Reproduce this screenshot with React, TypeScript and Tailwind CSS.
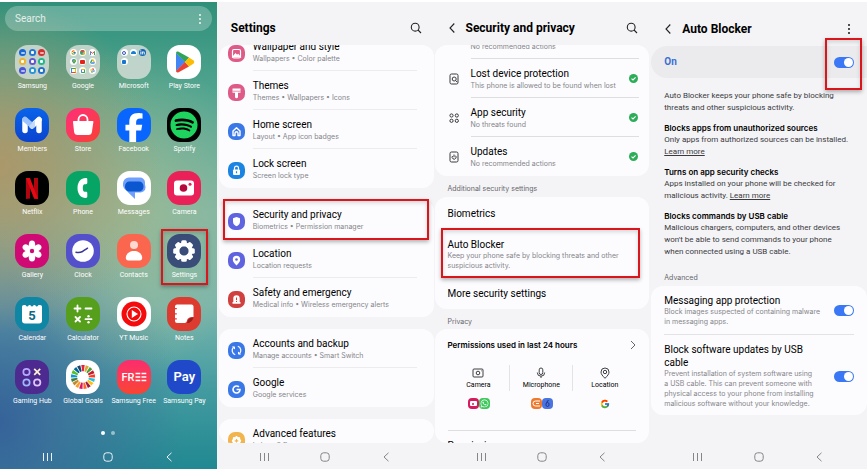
import React, { useState } from 'react';
import { FaFacebookF, FaGoogle, FaLinkedinIn, FaSpotify, FaWhatsapp } from 'react-icons/fa6';
import { FcGoogle } from 'react-icons/fc';

const GOALS = ['#e5243b', '#dda63a', '#4c9f38', '#c5192d', '#ff3a21', '#26bde2', '#fcc30b', '#a21942', '#fd6925', '#dd1367', '#fd9d24', '#bf8b2e', '#3f7e44', '#0a97d9', '#56c02b', '#00689d', '#19486a'];

/* ---------- shared pieces ---------- */

function Highlight({ className }: { className: string }) {
  return <span className={`pointer-events-none absolute z-10 border-2 border-[#d9161c] shadow-[0_2px_4px_rgba(0,0,0,0.3),inset_0_2px_4px_rgba(0,0,0,0.15)] ${className}`} />;
}

function NavBar({ light = false }: { light?: boolean }) {
  return (
    <nav className={`flex h-[26px] shrink-0 items-center justify-between px-[42px] pt-px ${light ? 'text-white/90' : 'text-[#85858a]'}`}>
      <button aria-label="Recents">
        <svg width="11" height="10" viewBox="0 0 11 10" stroke="currentColor" strokeWidth="1"><path d="M1.500 1v8M5.500 1v8M9.500 1v8" /></svg>
      </button>
      <button aria-label="Home">
        <svg width="10" height="10" viewBox="0 0 10 10" fill="none" stroke="currentColor" strokeWidth="1"><rect x="0.800" y="0.800" width="8.400" height="8.400" rx="2.800" /></svg>
      </button>
      <button aria-label="Back">
        <svg width="11" height="10" viewBox="0 0 11 10" fill="none" stroke="currentColor" strokeWidth="1"><path d="M7.500 0.800 3 5l4.500 4.200" /></svg>
      </button>
    </nav>
  );
}

function BackButton() {
  return (
    <button aria-label="Back" className="mr-[10px]">
      <svg width="8" height="12" viewBox="0 0 8 12" fill="none" stroke="#222" strokeWidth="1.100"><path d="M6.300 1.500 2 6l4.300 4.500" /></svg>
    </button>
  );
}

function SearchButton() {
  return (
    <button aria-label="Search" className="ml-auto">
      <svg width="12" height="12" viewBox="0 0 12 12" fill="none" stroke="#222" strokeWidth="1.100"><circle cx="5.200" cy="5.200" r="3.900" /><path d="m8 8 3 3" /></svg>
    </button>
  );
}

function MoreDots() {
  return <svg width="4" height="12" viewBox="0 0 4 12" fill="currentColor"><circle cx="2" cy="2" r="0.900" /><circle cx="2" cy="6" r="0.900" /><circle cx="2" cy="10" r="0.900" /></svg>;
}

function Toggle({ id }: { id: string }) {
  const [on, setOn] = useState(true);
  return (
    <input
      id={id}
      type="checkbox"
      role="switch"
      checked={on}
      onChange={() => setOn(!on)}
      className="relative h-[11px] w-5 shrink-0 appearance-none rounded-full bg-[#b5b5ba] before:absolute before:top-px before:left-px before:size-[9px] before:rounded-full before:bg-white checked:bg-[#3b78f5] checked:before:left-[10px]"
    />
  );
}

/* ---------- home screen ---------- */

const dot = (bg: string, inner?: React.ReactNode) => ({ bg, inner });
const bar = (c: string) => <span className={`h-[2px] w-1 rounded-full ${c}`} />;
const sq = (c: string) => <span className={`size-[3px] rounded-[1px] ${c}`} />;

const samsungApps = [
  dot('bg-[#1767d8]', bar('bg-[#a9cdf7]')), dot('bg-[#2277d5]', sq('bg-white')), dot('bg-[#d32f2f]', bar('bg-[#f6b0b0]')),
  dot('bg-[#efb32f]', sq('bg-white')), dot('bg-[#6257d2]', sq('bg-white')), dot('bg-[#21b98a]', sq('bg-white')),
  dot('bg-[#4a56d6]', bar('bg-[#b6bdf8]')), dot('bg-[#2595dc]', sq('bg-white')), dot('bg-[#1d6fd0]', sq('bg-white')),
];
const googleApps = [
  dot('bg-white', <FcGoogle size={5} />),
  dot('bg-white', <svg width="5" height="5" viewBox="0 0 10 10"><circle cx="5" cy="5" r="5" fill="#34a853" /><path d="M5 5 .7 2.500A5 5 0 0 1 9.300 2.500Z" fill="#ea4335" /><path d="M5 5 9.300 2.500A5 5 0 0 1 5 10Z" fill="#fbbc05" /><circle cx="5" cy="5" r="2" fill="#4285f4" /></svg>),
  dot('bg-white', <svg width="5" height="4" viewBox="0 0 10 8" fill="none" strokeWidth="2"><path d="M1 8V1" stroke="#4285f4" /><path d="m1 1 4 3.500L9 1" stroke="#ea4335" /><path d="M9 8V1" stroke="#34a853" /></svg>),
  dot('bg-white', <svg width="4" height="5" viewBox="0 0 8 10"><path d="M4 10C2 7 0 6 0 4a4 4 0 0 1 8 0c0 2-2 3-4 6Z" fill="#34a853" /><path d="M0 4a4 4 0 0 1 4-4v4Z" fill="#4285f4" /><circle cx="4" cy="4" r="1.500" fill="#fbbc05" /></svg>),
  dot('bg-white', <span className="h-1 w-[5px] rounded-[1px] bg-[#e62117]" />),
  dot('bg-white', <svg width="5" height="5" viewBox="0 0 10 9"><path d="M3.500 0h3L10 6H7Z" fill="#fbbc05" /><path d="M3.500 0 5 2.500 1.500 9 0 6Z" fill="#34a853" /><path d="M3 6h7L8.500 9h-7Z" fill="#4285f4" /></svg>),
  dot('bg-white', <span className="size-[5px] border border-t-[#34a853] border-r-[#fbbc05] border-b-[#ea4335] border-l-[#4285f4]" />),
  dot('bg-white', <span className="size-[4px] rounded-[1px] border border-t-[#fbbc05] border-r-[#34a853] border-b-[#34a853] border-l-[#4285f4]" />),
  dot('bg-white', <svg width="5" height="5" viewBox="0 0 10 10"><path d="M5 5V0a2.500 2.500 0 0 1 0 5" fill="#ea4335" /><path d="M5 5h5a2.500 2.500 0 0 1-5 0" fill="#4285f4" /><path d="M5 5v5a2.500 2.500 0 0 1 0-5" fill="#34a853" /><path d="M5 5H0a2.500 2.500 0 0 1 5 0" fill="#fbbc05" /></svg>),
];
const microsoftApps = [
  dot('bg-white', <span className="size-1 rounded-full border border-[#3a55b8]" />),
  dot('bg-white', <span className="h-[3px] w-[5px] rounded-t-full bg-[#1380d8]" />),
  dot('bg-[#1264b6]', <FaLinkedinIn size={5} color="#fff" />),
  dot('bg-white', <span className="size-[4px] rounded-[1px] bg-[#1976cf]" />),
];

function Folder({ items }: { items: { bg: string; inner?: React.ReactNode }[] }) {
  return (
    <div className="grid size-full grid-cols-3 content-start gap-[2px] bg-[#d3ddd6]/85 p-1">
      {items.map((it, i) => <span key={i} className={`flex size-[7px] items-center justify-center rounded-full ${it.bg}`}>{it.inner}</span>)}
    </div>
  );
}

function Art({ children }: { children: React.ReactNode }) {
  return <svg width="34" height="34" viewBox="0 0 34 34">{children}</svg>;
}

const apps: { name: string; bg: string; icon: React.ReactNode }[] = [
  { name: 'Samsung', bg: '', icon: <Folder items={samsungApps} /> },
  { name: 'Google', bg: '', icon: <Folder items={googleApps} /> },
  { name: 'Microsoft', bg: '', icon: <Folder items={microsoftApps} /> },
  {
    name: 'Play Store', bg: 'bg-white',
    icon: <Art><path d="M9 8v18L18.500 17Z" fill="#4285f4" /><path d="M9 8.200c0-1.600 1.300-2.100 2.600-1.400L22 12.600 18 17Z" fill="#30a45a" /><path d="M9 25.800c0 1.600 1.300 2.100 2.600 1.400L22 21.400 18 17Z" fill="#ea4335" /><path d="m22 12.500 4.300 2.700c1.300.9 1.300 2.700 0 3.600L22 21.500 17.800 17Z" fill="#fbbc04" /></Art>,
  },
  {
    name: 'Members', bg: 'bg-gradient-to-b from-[#0b63ea] to-[#0b43cf]',
    icon: <Art><path d="M10 22.500V12M24 22.500V12" stroke="#fff" strokeWidth="5.500" strokeLinecap="round" /><path d="m24 11.500-7 6.500" stroke="#fff" strokeWidth="5.500" strokeLinecap="round" /><path d="m10 11.500 7 6" stroke="#9cc3ff" strokeWidth="5.500" strokeLinecap="round" /><path d="M14.500 17.500 20 12.200v5.500l-3 3c-1 .4-2.500-1-2.500-3.200Z" fill="#c4dbff" /></Art>,
  },
  {
    name: 'Store', bg: 'bg-gradient-to-br from-[#ff2c78] to-[#f8402e]',
    icon: <Art><path d="M12.500 14v-2.500a4.500 4.500 0 0 1 9 0V14" fill="none" stroke="#fff" strokeWidth="1.800" /><path d="M8 13h18.500c.6 0 1 .4.900 1l-1.500 10a3.500 3.500 0 0 1-3.400 3h-11a3.500 3.500 0 0 1-3.400-3L7 14c-.1-.6.4-1 1-1Z" fill="#fff" /></Art>,
  },
  { name: 'Facebook', bg: 'bg-[#0866ff]', icon: <span className="mt-[5px] flex justify-center"><FaFacebookF size={30} color="#fff" /></span> },
  { name: 'Spotify', bg: 'bg-black', icon: <FaSpotify size={28} color="#1ed35e" className="mx-auto mt-[3px]" /> },
  {
    name: 'Netflix', bg: 'bg-black',
    icon: <Art><path d="M11 7h4v20.500l-4 .5ZM19 7h4v21l-4-.5Z" fill="#b1060f" /><path d="M11 7h4l8 21-4-.5Z" fill="#e50914" /></Art>,
  },
  {
    name: 'Phone', bg: 'bg-[#06a566]',
    icon: <Art><path d="M19.800 7c-5 0-8.300 4-8.300 10s3.300 10 8.300 10c1 0 1.500-.5 1.500-1.400v-3.400c0-.9-.5-1.400-1.400-1.400h-1.400c-1 0-1.700-1.500-1.700-3.800s.7-3.800 1.700-3.800h1.400c.9 0 1.400-.5 1.400-1.400V8.400c0-.9-.5-1.400-1.500-1.400Z" fill="#fff" /></Art>,
  },
  {
    name: 'Messages', bg: 'bg-white',
    icon: <Art><path d="M12 6.500h11a5 5 0 0 1 5 5v3a6 6 0 0 1-3 5.500H12a6 6 0 0 1-6-6v-1.500a6 6 0 0 1 6-6Z" fill="#6fa0fb" /><path d="M14 11h9.500a5 5 0 0 1 5 5v.500a5 5 0 0 1-5 5H18V28l-7-6.800a5 5 0 0 1-2.500-4.200Z" fill="#6fa0fb" /><path d="M12.500 10.500H22a4.500 4.500 0 0 1 4.500 5c0 3-2 5-5 5H13c-3 0-5-2-5-5a4.500 4.500 0 0 1 4.500-5Z" fill="#0b57d0" /></Art>,
  },
  {
    name: 'Camera', bg: 'bg-[#ea2158]',
    icon: <Art><rect x="7" y="9.500" width="20" height="15" rx="3" fill="#fff" /><circle cx="16.500" cy="17" r="3.800" fill="#b5093c" /><circle cx="23" cy="13.200" r="1.500" fill="#ea2158" /></Art>,
  },
  {
    name: 'Gallery', bg: 'bg-[#d00a74]',
    icon: <Art>{[0, 60, 120, 180, 240, 300].map((a) => <ellipse key={a} cx="17" cy="10.800" rx="3.200" ry="4.300" fill="#fff" transform={`rotate(${a} 17 17)`} />)}<circle cx="17" cy="17" r="4.500" fill="#fff" /><circle cx="17" cy="17" r="2.200" fill="#d00a74" /></Art>,
  },
  {
    name: 'Clock', bg: 'bg-[#5450cc]',
    icon: <Art><circle cx="17" cy="17" r="10.800" fill="#fff" /><path d="M10 18.200c3 .7 4.500.3 6.500-.7 1.500-.9 3-2 5-3.300" fill="none" stroke="#38339a" strokeWidth="1.500" strokeLinecap="round" /></Art>,
  },
  {
    name: 'Contacts', bg: 'bg-[#fb664f]',
    icon: <Art><circle cx="17" cy="11" r="4" fill="#ffd9d0" /><path d="M8.800 24c0-4 3.500-7 8.200-7s8.200 3 8.200 7c0 1.500-1 2.500-2.500 2.500H11.300c-1.500 0-2.500-1-2.500-2.500Z" fill="#fff" /></Art>,
  },
  {
    name: 'Settings', bg: 'bg-[#3a4d78]',
    icon: <Art>{[0, 45, 90, 135, 180, 225, 270, 315].map((a) => <rect key={a} x="14.200" y="6.200" width="5.600" height="6" rx="1.500" fill="#fff" transform={`rotate(${a} 17 17)`} />)}<circle cx="17" cy="17" r="6.700" fill="none" stroke="#fff" strokeWidth="4" /></Art>,
  },
  {
    name: 'Calendar', bg: 'bg-[#0e86a4]',
    icon: <Art><path d="M7 10c0-1.300.8-2 2-2h1.200c.8 0 .8 1.500 2 1.500s1.200-1.500 2-1.500h.8c.8 0 .8 1.500 2 1.500s1.200-1.500 2-1.500h.8c.8 0 .8 1.500 2 1.500s1.200-1.500 2-1.500H25c1.200 0 2 .7 2 2v13.500c0 1.800-1 3-3 3H10c-2 0-3-1.200-3-3Z" fill="#fff" /><text x="17" y="22.500" textAnchor="middle" fontSize="13" fontWeight="700" fill="#0b6a86">5</text></Art>,
  },
  {
    name: 'Calculator', bg: 'bg-[#569f1c]',
    icon: <Art><g stroke="#fff" strokeWidth="1.800" strokeLinecap="round"><path d="M8.500 11.500h6M11.500 8.500v6M19.500 11.500h6M9.500 20l4.500 4.500M14 20l-4.500 4.500M19.500 22.200h6" /></g><circle cx="22.500" cy="19.200" r="1.200" fill="#fff" /><circle cx="22.500" cy="25.200" r="1.200" fill="#fff" /></Art>,
  },
  {
    name: 'YT Music', bg: 'bg-white',
    icon: <Art><circle cx="17" cy="17" r="12.500" fill="#f40b0b" /><circle cx="17" cy="17" r="7" fill="none" stroke="#fff" strokeWidth="1.100" /><path d="m14.800 13 6.200 4-6.200 4Z" fill="#fff" /></Art>,
  },
  {
    name: 'Notes', bg: 'bg-[#dd3a30]',
    icon: <Art><path d="M10 7.500h14.500a2 2 0 0 1 2 2V20c-3.500-.5-6 1-6.500 3.500-.2 1.500-1 2.500-2.500 2.500H10a2 2 0 0 1-2-2V22.500h1.800v-1.300H8v-3.700h1.800v-1.300H8v-4h1.800v-1.300H8V9.500a2 2 0 0 1 2-2Z" fill="#fff" /><path d="M26.500 20.500c-3-.2-5.300 1-5.800 3.600l-.7 2c3.500 0 5.500-2.600 6.500-5.600Z" fill="#9c1d1a" /></Art>,
  },
  {
    name: 'Gaming Hub', bg: 'bg-[#4c2a90]',
    icon: <Art><g fill="none" strokeWidth="1.700"><circle cx="11.500" cy="12" r="3.200" stroke="#b9a8ff" /><path d="m19.200 8.900 6 6M25.200 8.900l-6 6" stroke="#fff3d6" /><circle cx="11.500" cy="22.500" r="3.200" stroke="#9db7ff" /><circle cx="22.200" cy="22.500" r="3.200" stroke="#e0c6ff" /></g></Art>,
  },
  {
    name: 'Global Goals', bg: 'bg-white',
    icon: <Art>{GOALS.map((c, i) => <path key={c} d="M15.300 5h3.400l-.9 6.200h-1.600Z" fill={c} transform={`rotate(${i * 21.18} 17 17)`} />)}</Art>,
  },
  {
    name: 'Samsung Free', bg: 'bg-gradient-to-b from-[#fb2c6d] to-[#f9442f]',
    icon: <Art><text x="4.500" y="20.800" fontSize="11" fontWeight="500" fill="#fff">FR</text><path d="M18.500 13.500h4.800M18.500 17h4.800M18.500 20.500h4.800M24.500 13.500h4.800M24.500 17h4.800M24.500 20.500h4.800" stroke="#fff" strokeWidth="1.400" /></Art>,
  },
  { name: 'Samsung Pay', bg: 'bg-[#1f49c8]', icon: <span className="block text-center text-[13px] leading-[34px] font-semibold text-white">Pay</span> },
];

function HomeScreen() {
  return (
    <section className="flex min-w-0 flex-col bg-[radial-gradient(ellipse_75%_36%_at_0%_35%,#ab986a_0%,#ab986acc_30%,#ab986a00_100%),radial-gradient(ellipse_60%_35%_at_60%_45%,#9fb890cc_0%,#9fb89000_100%),radial-gradient(ellipse_85%_48%_at_0%_90%,#36639a_0%,#3d6b9bcc_30%,#6f93a400_100%),linear-gradient(to_bottom,#2f907a_0%,#52a590_20%,#7fb8a8_45%,#7ab6ad_65%,#459ca1_82%,#218891_100%)]">
      <div className="mx-[5px] mt-1 flex h-[25px] items-center rounded-full bg-white/25 px-[10px] text-white">
        <input type="search" aria-label="Search" placeholder="Search" className="min-w-0 flex-1 bg-transparent text-[10px] leading-3 outline-none placeholder:text-white/80" />
        <button aria-label="More options"><MoreDots /></button>
      </div>
      <div className="mt-[14px] grid grid-cols-4 px-[7px]">
        {apps.map((a) => (
          <button key={a.name} className="relative flex h-[63px] flex-col items-center">
            <span className={`block size-[34px] overflow-hidden rounded-[13px] ${a.bg}`}>{a.icon}</span>
            <span className="mt-px text-[7px] leading-3 whitespace-nowrap text-white">{a.name}</span>
            {a.name === 'Settings' && <Highlight className="inset-x-[2px] -top-[5px] bottom-3" />}
          </button>
        ))}
      </div>
      <div className="mt-auto mb-2 flex justify-center gap-[6px]">
        <span className="size-1 rounded-full bg-white" />
        <span className="size-1 rounded-full bg-white/50" />
      </div>
      <NavBar light />
    </section>
  );
}

/* ---------- settings ---------- */

function Glyph({ children }: { children: React.ReactNode }) {
  return <svg width="17" height="17" viewBox="0 0 17 17" fill="none" stroke="#fff" strokeWidth="1.200">{children}</svg>;
}

type Row = { title: string; sub: string; bg: string; icon: React.ReactNode; marked?: boolean };

const groups: Row[][] = [
  [
    { title: 'Wallpaper and style', sub: 'Wallpapers • Color palette', bg: 'bg-[#de5a87]', icon: <Glyph><rect x="4.500" y="4.500" width="8" height="8.500" rx="1.500" /><path d="m5 12 2.500-3 1.500 1.500 1.200-1 2 2.500Z" fill="#fff" /></Glyph> },
    { title: 'Themes', sub: 'Themes • Wallpapers • Icons', bg: 'bg-[#de5a87]', icon: <Glyph><path d="M4.500 4.500h8v4.300H10v4a1.400 1.400 0 0 1-3 0v-4H4.500Z" fill="#fff" stroke="none" /><path d="M4.500 7.200h8" stroke="#de5a87" strokeWidth="0.700" /></Glyph> },
    { title: 'Home screen', sub: 'Layout • App icon badges', bg: 'bg-[#3b78e7]', icon: <Glyph><path d="M5 12.500V8L8.500 4.800 12 8v4.500h-2v-2.200a1.500 1.500 0 0 0-3 0v2.200Z" strokeWidth="1.400" strokeLinejoin="round" /></Glyph> },
    { title: 'Lock screen', sub: 'Screen lock type', bg: 'bg-[#1b84e2]', icon: <Glyph><path d="M6.500 8V6.200a2 2 0 0 1 4 0V8" /><rect x="5" y="7.500" width="7" height="5.500" rx="1" fill="#fff" stroke="none" /><path d="M8.500 9.300v2" stroke="#1b84e2" /></Glyph> },
  ],
  [
    { title: 'Security and privacy', sub: 'Biometrics • Permission manager', bg: 'bg-[#5f63e0]', icon: <Glyph><path d="M8.500 4 12 5.200v3.600c0 2.200-1.500 3.500-3.500 4.400C6.500 12.300 5 11 5 8.800V5.200Z" fill="#fff" stroke="none" /></Glyph>, marked: true },
    { title: 'Location', sub: 'Location requests', bg: 'bg-[#5f63e0]', icon: <Glyph><path d="M8.500 13.500C6 10.800 4.800 9.500 4.800 7.500a3.700 3.700 0 0 1 7.400 0c0 2-1.200 3.300-3.700 6Z" fill="#fff" stroke="none" /><circle cx="8.500" cy="7.500" r="1.300" fill="#5f63e0" stroke="none" /></Glyph> },
    { title: 'Safety and emergency', sub: 'Medical info • Wireless emergency alerts', bg: 'bg-[#cf403f]', icon: <Glyph><path d="M5.300 11V7.500a3.200 3.200 0 0 1 6.400 0V11h.8v1.800h-8V11Z" fill="#fff" stroke="none" /><path d="M8.500 6.500v2.700M8.500 10v1" stroke="#cf403f" strokeWidth="1" /></Glyph> },
  ],
  [
    { title: 'Accounts and backup', sub: 'Manage accounts • Smart Switch', bg: 'bg-[#3b78e7]', icon: <Glyph><path d="M7.200 12.700A4.300 4.300 0 0 1 5.700 5.300M9.800 4.300a4.300 4.300 0 0 1 1.500 7.400" /><path d="M4.300 4.900h2.200v2.200M12.700 12.100h-2.200V9.900" strokeWidth="1" /></Glyph> },
    { title: 'Google', sub: 'Google services', bg: 'bg-[#3b78e7]', icon: <FaGoogle size={9} color="#fff" /> },
  ],
  [
    { title: 'Advanced features', sub: 'Labs • S Pen', bg: 'bg-[#f2b44c]', icon: <Glyph><path d="m8.500 3.800 1.500 1.300 2 .1.300 2 1 1.600-1 1.600-.3 2-2 .1-1.500 1.300L7 12.500l-2-.1-.3-2-1-1.600 1-1.600.3-2 2-.1Z" fill="#fff" stroke="none" /><path d="M8.500 7v3.600M6.700 8.800h3.600" stroke="#f2b44c" /></Glyph> },
  ],
];

function SettingsScreen() {
  return (
    <section className="flex min-w-0 flex-col bg-[#f4f4f6]">
      <header className="flex h-[43px] shrink-0 items-center pt-[9px] pr-3 pl-[14px]">
        <h1 className="text-[12px] leading-4 font-bold">Settings</h1>
        <SearchButton />
      </header>
      <div className="ml-[2px] min-h-0 flex-1 overflow-hidden rounded-[12px]">
        <div className="-mt-[13px] flex flex-col gap-3">
          {groups.map((rows, g) => (
            <ul key={g} className="rounded-[12px] bg-[#fcfcfe]">
              {rows.map((r, i) => (
                <li key={r.title} className="relative h-[39px]">
                  <button className="flex w-full items-center gap-2 pr-[17px] pl-[9px] text-left">
                    <span className={`mt-1 flex size-[17px] shrink-0 items-center justify-center rounded-[7px] ${r.bg}`}>{r.icon}</span>
                    <span className={`h-[39px] flex-1 border-b pt-[9px] ${i < rows.length - 1 && !r.marked ? 'border-[#ececef]' : 'border-transparent'}`}>
                      <span className="block text-[10px] leading-3 text-black">{r.title}</span>
                      <span className="block font-['Inter',sans-serif] text-[7px] leading-3 whitespace-nowrap text-[#85858a]">{r.sub}</span>
                    </span>
                  </button>
                  {r.marked && <Highlight className="-inset-y-px right-[5px] left-1" />}
                </li>
              ))}
            </ul>
          ))}
        </div>
      </div>
      <NavBar />
    </section>
  );
}

/* ---------- security and privacy ---------- */

function Check() {
  return <svg width="9" height="9" viewBox="0 0 9 9"><circle cx="4.500" cy="4.500" r="4.500" fill="#2bae57" /><path d="m2.500 4.600 1.500 1.400 2.600-2.700" fill="none" stroke="#fff" strokeWidth="1.100" /></svg>;
}

const checks = [
  { title: '', sub: 'No recommended actions', icon: null },
  { title: 'Lost device protection', sub: 'This phone is allowed to be found when lost', icon: <><rect x="2" y="1" width="8" height="10" rx="1.500" /><circle cx="6.200" cy="6" r="2" /><path d="m7.600 7.500 1.800 1.800" /></> },
  { title: 'App security', sub: 'No threats found', icon: <><circle cx="3.500" cy="3.500" r="1.600" /><circle cx="8.800" cy="3.500" r="1.600" /><circle cx="3.500" cy="8.800" r="1.600" /><circle cx="8.800" cy="8.800" r="1.600" /></> },
  { title: 'Updates', sub: 'No recommended actions', icon: <><rect x="2" y="1" width="8" height="10" rx="1.500" /><path d="M4.500 5a2 2 0 1 0 3-.3M6 3.500v2.700" /></> },
];

const permissions = [
  {
    name: 'Camera',
    icon: <><rect x="1" y="2" width="10" height="8" rx="1" /><circle cx="6" cy="6" r="1.800" /><path d="M9 3.800h.6" /></>,
    used: (
      <>
        <span className="flex size-[11px] items-center justify-center rounded-[4px] bg-[#d51b5b]"><span className="flex h-[5px] w-[7px] items-center justify-center rounded-[1px] bg-white"><span className="size-[2px] rounded-full bg-[#d51b5b]" /></span></span>
        <span className="flex size-[11px] items-center justify-center rounded-[4px] bg-[#3fc65c]"><FaWhatsapp size={9} color="#fff" /></span>
      </>
    ),
  },
  {
    name: 'Microphone',
    icon: <><rect x="4.200" y="1" width="3.600" height="6.500" rx="1.800" /><path d="M2.300 5.500a3.700 3.700 0 0 0 7.400 0M6 9.200V11" /></>,
    used: (
      <>
        <span className="flex size-[11px] items-center justify-center rounded-[4px] bg-[#ee7a2e]"><svg width="9" height="9" viewBox="0 0 9 9" fill="none" stroke="#fff"><path d="M8 2H3.500a2.500 2.500 0 0 0 0 5H8M7 4.500H4" /></svg></span>
        <span className="flex size-[11px] items-center justify-center rounded-[4px] bg-[#4a74e0]"><svg width="7" height="9" viewBox="0 0 7 9" fill="none" stroke="#1c2f80"><path d="M4.500 1 2.500 3.500M3.500 3.500c2 0 2 4 0 4s-2-4 0-4Z" /></svg></span>
      </>
    ),
  },
  {
    name: 'Location',
    icon: <><path d="M6 11.300C3.500 8.700 2 7.200 2 5a4 4 0 0 1 8 0c0 2.200-1.500 3.700-4 6.300Z" /><circle cx="6" cy="5" r="1.700" /></>,
    used: <FcGoogle size={10} />,
  },
];

function SecurityScreen() {
  return (
    <section className="flex min-w-0 flex-col bg-[#f4f4f6]">
      <header className="flex h-[43px] shrink-0 items-center pt-[9px] pr-3 pl-[14px]">
        <BackButton />
        <h1 className="text-[12px] leading-4 font-bold">Security and privacy</h1>
        <SearchButton />
      </header>
      <div className="mx-px min-h-0 flex-1 overflow-hidden rounded-[12px]">
        <ul className="-mt-[25px] rounded-[12px] bg-[#fcfcfe]">
          {checks.map((c, i) => (
            <li key={c.title}>
              <button className="flex w-full gap-[11px] pr-[10px] pl-[13px] text-left">
                <svg width="12" height="12" viewBox="0 0 12 12" className="mt-[14px] shrink-0" fill="none" stroke="#3a3a3e" strokeWidth="1">{c.icon}</svg>
                <span className={`flex h-[39px] flex-1 items-center justify-between border-b pr-px ${i < checks.length - 1 ? 'border-[#dededf]' : 'border-transparent'}`}>
                  <span className="pt-1">
                    <span className="block min-h-3 text-[10px] leading-3 text-black">{c.title}</span>
                    <span className="block font-['Inter',sans-serif] text-[7px] leading-3 whitespace-nowrap text-[#85858a]">{c.sub}</span>
                  </span>
                  <Check />
                </span>
              </button>
            </li>
          ))}
        </ul>
        <h2 className="h-[21px] px-[13px] pt-[7px] font-['Inter',sans-serif] text-[7px] leading-3 text-[#66666b]">Additional security settings</h2>
        <div className="rounded-[12px] bg-[#fcfcfe] text-[10px]">
          <button className="flex h-8 w-full items-center px-[13px]">Biometrics</button>
          <button className="relative block h-12 w-full pt-[3px] pr-5 pl-[13px] text-left">
            <span className="block leading-3">Auto Blocker</span>
            <span className="block font-['Inter',sans-serif] text-[7px] leading-[10px] text-[#85858a]">Keep your phone safe by blocking threats and other suspicious activity.</span>
            <Highlight className="-inset-y-px right-[9px] left-[6px]" />
          </button>
          <button className="flex h-8 w-full items-center px-[13px]">More security settings</button>
        </div>
        <h2 className="h-5 px-[13px] pt-[7px] font-['Inter',sans-serif] text-[7px] leading-3 text-[#66666b]">Privacy</h2>
        <div className="rounded-[12px] bg-[#fcfcfe] px-[13px]">
          <button className="flex h-8 w-full items-center justify-between font-['Inter',sans-serif] text-[8px] font-semibold">
            Permissions used in last 24 hours
            <svg width="6" height="10" viewBox="0 0 6 10" fill="none" stroke="#66666b"><path d="m1 1 4 4-4 4" /></svg>
          </button>
          <div className="mt-1 grid h-[65px] grid-cols-3">
            {permissions.map((p, i) => (
              <div key={p.name} className="text-center">
                <div className={`flex h-[26px] flex-col items-center pt-[2px] ${i < 2 ? 'border-r border-[#e3e3e6]' : ''}`}>
                  <svg width="12" height="12" viewBox="0 0 12 12" className="shrink-0" fill="none" stroke="#2b2b2e" strokeWidth="0.900">{p.icon}</svg>
                  <span className="text-[7px] leading-3">{p.name}</span>
                </div>
                <div className="mt-[7px] flex h-[11px] items-center justify-center">{p.used}</div>
              </div>
            ))}
          </div>
          <button className="w-full border-t border-[#dededf] pt-[9px] text-left text-[10px] leading-3">Permission manager</button>
        </div>
      </div>
      <NavBar />
    </section>
  );
}

/* ---------- auto blocker ---------- */

function AutoBlockerScreen() {
  return (
    <section className="flex min-w-0 flex-col bg-[#f4f4f6]">
      <header className="flex h-[44px] shrink-0 items-center pt-[9px] pr-4 pl-[14px]">
        <BackButton />
        <h1 className="text-[12px] leading-4 font-bold">Auto Blocker</h1>
        <button aria-label="More options" className="ml-auto"><MoreDots /></button>
      </header>
      <div className="relative ml-px flex h-8 shrink-0 items-center justify-between rounded-l-full bg-[#ebebed] px-[13px]">
        <label htmlFor="auto-blocker" className="text-[10px] leading-3 font-bold text-[#3b6fd4]">On</label>
        <Toggle id="auto-blocker" />
        <Highlight className="-top-2 right-[5px] -bottom-3 w-[37px]" />
      </div>
      <div className="flex shrink-0 flex-col gap-2 pt-3 pr-5 pl-[14px] text-[8px] leading-3 text-[#3a3a3e]">
        <p>Auto Blocker keeps your phone safe by blocking threats and other suspicious activity.</p>
        <div>
          <h2 className="font-['Inter',sans-serif] font-semibold text-black">Blocks apps from unauthorized sources</h2>
          <p className="-mr-3">Only apps from authorized sources can be installed. <a href="#sources" className="underline">Learn more</a></p>
        </div>
        <div>
          <h2 className="font-['Inter',sans-serif] font-semibold text-black">Turns on app security checks</h2>
          <p>Apps installed on your phone will be checked for malicious activity. <a href="#checks" className="underline">Learn more</a></p>
        </div>
        <div>
          <h2 className="font-['Inter',sans-serif] font-semibold text-black">Blocks commands by USB cable</h2>
          <p>Malicious chargers, computers, and other devices won't be able to send commands to your phone when connected using a USB cable.</p>
        </div>
      </div>
      <h2 className="mt-2 h-5 shrink-0 px-[14px] pt-[6px] font-['Inter',sans-serif] text-[7px] leading-3 text-[#66666b]">Advanced</h2>
      <div className="ml-px shrink-0 rounded-[12px] bg-[#fcfcfe] px-[13px]">
        <div className="flex items-center justify-between border-b border-[#e3e3e6] pt-2 pb-[7px]">
          <label htmlFor="messaging" className="w-40">
            <span className="block text-[10px] leading-[13px]">Messaging app protection</span>
            <span className="block font-['Inter',sans-serif] text-[7px] leading-[10px] text-[#85858a]">Block images suspected of containing malware in messaging apps.</span>
          </label>
          <Toggle id="messaging" />
        </div>
        <div className="flex items-center justify-between pt-2 pb-[6px]">
          <label htmlFor="usb-updates" className="w-[151px]">
            <span className="block text-[10px] leading-[13px]">Block software updates by USB cable</span>
            <span className="block font-['Inter',sans-serif] text-[7px] leading-[10px] text-[#85858a]">Prevent installation of system software using a USB cable. This can prevent someone with physical access to your phone from installing malicious software without your knowledge.</span>
          </label>
          <Toggle id="usb-updates" />
        </div>
      </div>
      <div className="flex-1" />
      <NavBar />
    </section>
  );
}

export default function App() {
  return (
    <main className="grid h-screen grid-cols-4 grid-rows-[minmax(0,1fr)] overflow-hidden bg-white pt-[2px] pb-[3px] font-['Roboto',sans-serif] text-black">
      <HomeScreen />
      <SettingsScreen />
      <SecurityScreen />
      <AutoBlockerScreen />
    </main>
  );
}
